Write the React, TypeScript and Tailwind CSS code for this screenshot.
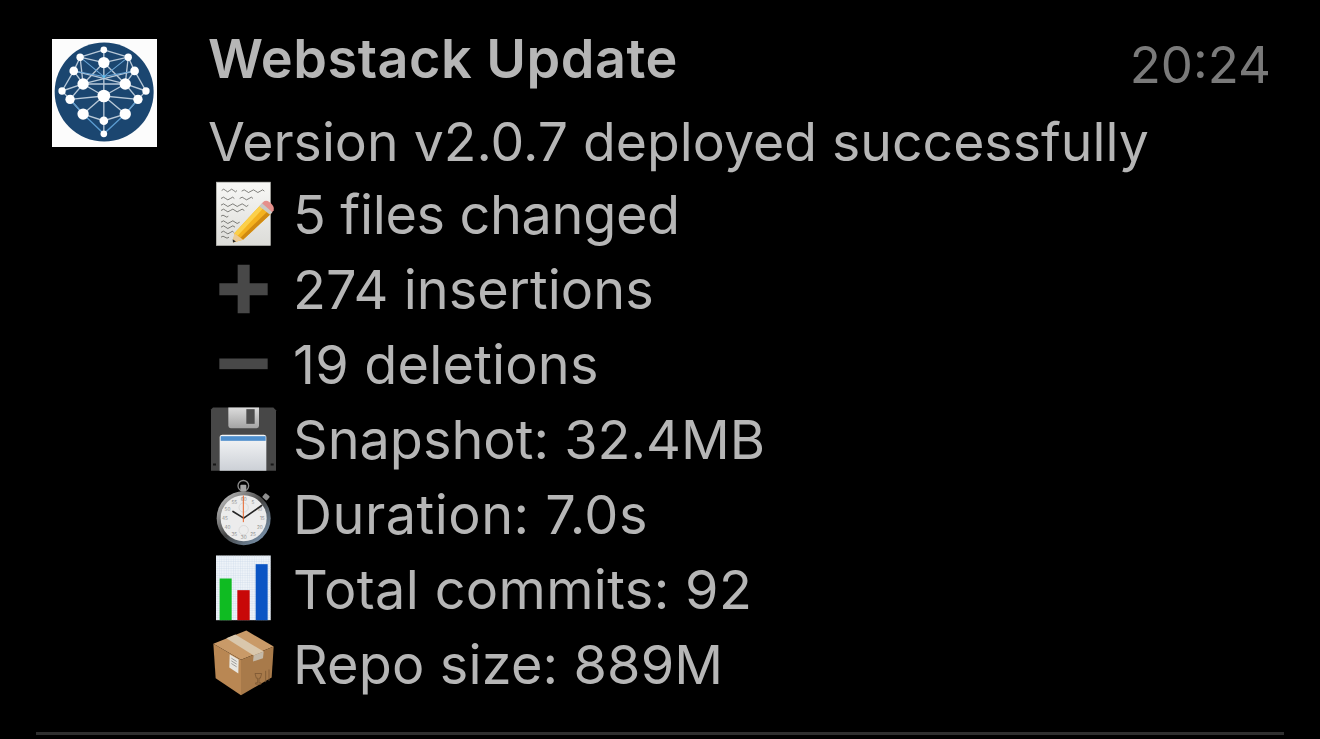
import type { ReactNode } from 'react';

// icons are drawn in 3x coordinates, each svg covers one 66x75 row slot
function Slot({ viewBox, children }: { viewBox: string; children: ReactNode }) {
  return (
    <svg viewBox={viewBox} className="h-[75px] w-[66px] shrink-0 overflow-visible">
      {children}
    </svg>
  );
}

function Logo() {
  const nodes = [
    [193, 60, 10], [122, 82, 11], [266, 82, 11], [193, 98, 17], [103, 123, 13], [285, 123, 13],
    [131, 162, 17], [257, 162, 17], [68, 183, 11], [319, 183, 11], [92, 208, 14], [295, 208, 14],
    [193, 198, 19], [131, 252, 17], [257, 252, 17], [193, 272, 13], [193, 311, 10],
  ];
  const links = [
    [0, 3], [0, 1], [0, 2], [1, 3], [2, 3], [1, 4], [2, 5], [4, 6], [5, 7], [1, 6], [2, 7], [3, 6], [3, 7],
    [3, 12], [4, 8], [5, 9], [6, 8], [7, 9], [8, 10], [9, 11], [6, 10], [7, 11], [10, 12], [11, 12], [6, 12],
    [7, 12], [10, 13], [11, 14], [13, 12], [14, 12], [13, 15], [14, 15], [12, 15], [15, 16], [6, 7], [4, 7], [5, 6],
  ];
  return (
    <svg viewBox="38 28 314 322" className="h-[108px] w-[105px] shrink-0 bg-[#fcfcfc]">
      <circle cx="194" cy="186" r="148" fill="#1b4670" />
      {links.map(([a, b], i) => (
        <line
          key={i}
          x1={nodes[a][0]}
          y1={nodes[a][1]}
          x2={nodes[b][0]}
          y2={nodes[b][1]}
          stroke="#b9c9d8"
          strokeWidth="4"
        />
      ))}
      <path d="M131 252 193 311 257 252M92 208 131 252M295 208 257 252" fill="none" stroke="#5a9bd0" strokeWidth="4" />
      <path d="M122 82 193 140 266 82M103 123 193 140 285 123" fill="none" stroke="#6ba7d8" strokeWidth="3" />
      {nodes.map(([cx, cy, r], i) => (
        <circle key={i} cx={cx} cy={cy} r={r} fill="#fff" />
      ))}
      <circle cx="193" cy="140" r="4" fill="#5cc0ee" />
    </svg>
  );
}

function NoteIcon() {
  return (
    <Slot viewBox="15 10.5 198 225">
      <defs>
        <linearGradient id="paper" x1="0" y1="0" x2="0" y2="1">
          <stop offset="0" stopColor="#f8f8f6" />
          <stop offset="1" stopColor="#dcdcd8" />
        </linearGradient>
      </defs>
      <rect x="34" y="23" width="162" height="190" fill="url(#paper)" stroke="#bdbdb8" strokeWidth="2" />
      <path
        d="M50 48q6-8 12 0t12 0 12 0 10 0M110 50q8-8 14 0t14 0 14 0 14 0 12 0M48 72q8-8 14 0t14 0 12 0M104 72q8-8 14 0t14 0 12 0M48 92q8-8 14 0t14 0 14 0 14 0 14 0 12 0M48 108q8-8 14 0t14 0 14 0 14 0 14 0M48 125q6-6 12 0t10 0M48 143q8-8 14 0t14 0 14 0 14 0M48 158q8-8 14 0t14 0 14 0M48 174q8-8 14 0t14 0 10 0M48 188q6-6 12 0t12 0"
        fill="none"
        stroke="#44443f"
        strokeWidth="2"
      />
      <path d="M88 176 166 92 198 118 114 196 84 204Z" fill="#f4b21f" />
      <path d="M88 176 166 92 176 100 98 184Z" fill="#fbd04a" />
      <path d="M106 190 188 110 198 118 114 196Z" fill="#d08a12" />
      <path d="M88 176 98 184 114 196 84 204Z" fill="#eccb96" />
      <path d="M84 204 83 194 93 201Z" fill="#2b2b2b" />
      <path d="M166 92 174 83q8-8 20 0 16 12 12 24l-8 11Z" fill="#e5908c" />
      <path d="M163 95 171 86 202 113 195 121Z" fill="#c9c9c6" />
    </Slot>
  );
}

function PlusIcon() {
  return (
    <Slot viewBox="15 235.5 198 225">
      <path d="M98 271h36v55h54v36h-54v54H98v-54H43v-36h55Z" fill="#484848" />
    </Slot>
  );
}

function MinusIcon() {
  return (
    <Slot viewBox="15 460.5 198 225">
      <rect x="43" y="552" width="145" height="32" fill="#484848" />
    </Slot>
  );
}

function FloppyIcon() {
  return (
    <Slot viewBox="15 10.5 198 225">
      <defs>
        <linearGradient id="label" x1="0" y1="0" x2="0" y2="1">
          <stop offset="0" stopColor="#f6f7f8" />
          <stop offset="1" stopColor="#ccd0d6" />
        </linearGradient>
        <linearGradient id="shutter" x1="0" y1="0" x2="0" y2="1">
          <stop offset="0" stopColor="#dcdcdc" />
          <stop offset="1" stopColor="#a4a4a4" />
        </linearGradient>
      </defs>
      <path d="M24 24h181l8 8v182H18V30Z" fill="#474747" />
      <path d="M70 24h92v55q0 7-7 7H77q-7 0-7-7Z" fill="url(#shutter)" />
      <rect x="124" y="29" width="25" height="44" fill="#4d4d4d" />
      <path d="M44 214v-100q0-8 8-8h124q8 0 8 8v100Z" fill="url(#label)" />
      <rect x="47" y="110" width="135" height="14" fill="#4f8fcd" />
      <rect x="24" y="192" width="9" height="6" fill="#161616" />
      <rect x="197" y="192" width="9" height="6" fill="#161616" />
    </Slot>
  );
}

function StopwatchIcon() {
  const marks = ['60', '5', '10', '15', '20', '25', '30', '35', '40', '45', '50', '55'];
  return (
    <Slot viewBox="15 235.5 198 225">
      <defs>
        <linearGradient id="rim" x1="0" y1="0" x2="1" y2="1">
          <stop offset="0" stopColor="#d8d8d8" />
          <stop offset="0.5" stopColor="#444" />
          <stop offset="1" stopColor="#88a8c8" />
        </linearGradient>
      </defs>
      <circle cx="115" cy="259" r="16" fill="none" stroke="#8b8b8b" strokeWidth="4" />
      <rect x="106" y="256" width="18" height="20" rx="3" fill="#a6a6a6" />
      <rect x="174" y="284" width="18" height="16" rx="3" fill="#8f8f8f" transform="rotate(40 183 292)" />
      <circle cx="116" cy="356" r="81" fill="url(#rim)" />
      <circle cx="116" cy="356" r="69" fill="#ececec" />
      {marks.map((m, i) => {
        const a = (i * Math.PI) / 6;
        return (
          <text
            key={m}
            x={116 + 56 * Math.sin(a)}
            y={361 - 56 * Math.cos(a)}
            textAnchor="middle"
            fontSize="14"
            fill="#8a8a8a"
            fontFamily="Inter, sans-serif"
          >
            {m}
          </text>
        );
      })}
      <circle cx="116" cy="324" r="14" fill="none" stroke="#d0d0d0" strokeWidth="2" />
      <circle cx="116" cy="392" r="14" fill="none" stroke="#d0d0d0" strokeWidth="2" />
      <path d="M116 356 84 336M116 356 170 318" stroke="#262626" strokeWidth="5" strokeLinecap="round" />
      <path d="M115 288V368" stroke="#e8662c" strokeWidth="3" />
    </Slot>
  );
}

function ChartIcon() {
  return (
    <Slot viewBox="15 10.5 198 225">
      <defs>
        <pattern id="grid" width="7" height="7" patternUnits="userSpaceOnUse">
          <path d="M7 0H0V7" fill="none" stroke="#c4d4e6" strokeWidth="1.5" />
        </pattern>
      </defs>
      <rect x="33" y="18" width="164" height="194" fill="#eef3f8" />
      <rect x="33" y="18" width="164" height="194" fill="url(#grid)" />
      <rect x="44" y="87" width="36" height="125" fill="#0fbb22" />
      <rect x="97" y="122" width="37" height="90" fill="#c80808" />
      <rect x="152" y="44" width="36" height="168" fill="#0b55c4" />
    </Slot>
  );
}

function BoxIcon() {
  return (
    <Slot viewBox="15 235.5 198 225">
      <path d="M25 283 124 243 206 291 108 331Z" fill="#c99a68" />
      <path d="M25 283 108 331V437L32 386Z" fill="#b98753" />
      <path d="M108 331 206 291 200 384 108 437Z" fill="#a87a4a" />
      <path d="M64 266 91 255 176 306 146 318Z" fill="#d9c7ac" />
      <path d="M146 318 176 306 174 326 144 336Z" fill="#c4b9a8" />
      <path d="M74 314 101 330 100 372 73 354Z" fill="#e8e6e0" />
      <path d="M79 326 95 336M79 334 95 344M79 342 95 352" stroke="#777" strokeWidth="2" />
      <path
        d="M150 372h20l-4 14h-4v14h6v4h-16v-4h6v-14h-4ZM182 364v34M192 360v34"
        fill="none"
        stroke="#7a5632"
        strokeWidth="3"
        opacity="0.8"
      />
    </Slot>
  );
}

// tracking is per row, Inter's widths differ a little from the original font
const rows = [
  { icon: <NoteIcon />, text: '5 files changed', track: 'tracking-[-0.35px]' },
  { icon: <PlusIcon />, text: '274 insertions', track: 'tracking-[0.05px]' },
  { icon: <MinusIcon />, text: '19 deletions', track: 'tracking-[0.2px]' },
  { icon: <FloppyIcon />, text: 'Snapshot: 32.4MB', track: 'tracking-normal' },
  { icon: <StopwatchIcon />, text: 'Duration: 7.0s', track: 'tracking-[0.5px]' },
  { icon: <ChartIcon />, text: 'Total commits: 92', track: 'tracking-[0.35px]' },
  { icon: <BoxIcon />, text: 'Repo size: 889M', track: 'tracking-[0.15px]' },
];

export default function App() {
  return (
    <div className="flex h-[739px] flex-col bg-black font-['Inter',sans-serif] text-[#b6b6b6]">
      <div className="flex flex-1 pl-[52px] pr-[49px] pt-[39px]">
        <Logo />
        <div className="ml-[53px] flex-1">
          <div className="-mt-[16px] flex h-[75px] items-center justify-between">
            <span className="-ml-[2px] -mt-[4px] text-[54px] font-semibold leading-none tracking-[0.5px]">Webstack Update</span>
            <span className="mt-2 text-[51px] leading-none text-[#7a7a7a]">20:24</span>
          </div>
          <div className="-ml-[2px] flex h-[80px] items-end text-[53.5px] leading-[75px] tracking-[0.03px]">
            <span className="relative top-[1px]">Version v2.0.7 deployed successfully</span>
          </div>
          {rows.map((row) => (
            <div key={row.text} className="flex h-[75px] items-center">
              {row.icon}
              <span className={`ml-[17px] mb-[2px] text-[54px] leading-none ${row.track}`}>{row.text}</span>
            </div>
          ))}
        </div>
      </div>
      <div className="mx-[36px] mb-[4px] h-[3px] bg-[#2f2f2f]" />
    </div>
  );
}
